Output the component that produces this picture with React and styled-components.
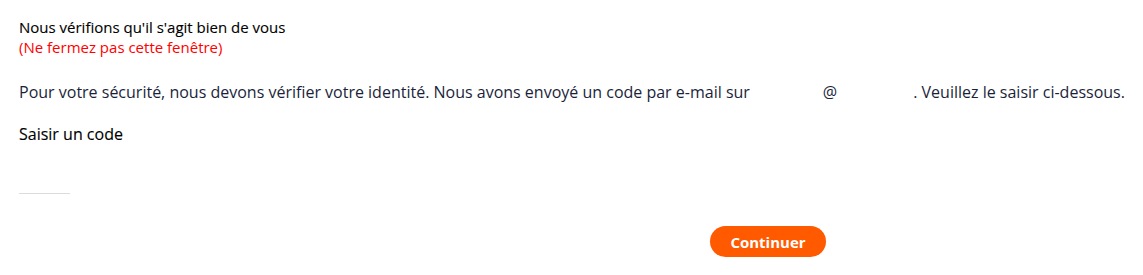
import React, { useState } from 'react';
import styled, { createGlobalStyle } from 'styled-components';

const GlobalStyle = createGlobalStyle`
  body {
    margin: 0;
    background: #fff;
    font-family: "Open Sans", "Noto Sans", sans-serif;
  }
`;

const Page = styled.div`
  padding: 17px 19px 0 19px;
  display: flex;
  flex-direction: column;
`;

const Title = styled.h2`
  margin: 0;
  font-size: 15px;
  font-weight: 400;
  line-height: 20px;
  color: #000;
  -webkit-text-stroke: 0.12px #000;
`;

const Warning = styled.p`
  margin: 0;
  font-size: 15px;
  line-height: 20px;
  color: #ff0000;
`;

const Message = styled.p`
  margin: 24px 0 0 0;
  font-size: 16px;
  line-height: 22px;
  color: #1b1f3b;
  white-space: nowrap;
`;

const Hidden = styled.span`
  display: inline-block;
  width: ${p => p.w}px;
`;

const Label = styled.label`
  margin-top: 20px;
  font-size: 16px;
  font-weight: 400;
  line-height: 22px;
  color: #000;
  -webkit-text-stroke: 0.12px #000;
`;

const CodeInput = styled.input`
  margin-top: 28px;
  width: 51px;
  height: 20px;
  padding: 0;
  border: 0;
  border-bottom: 1px solid #dcdcdc;
  font-family: inherit;
  font-size: 15px;
  outline: none;
`;

const Footer = styled.div`
  display: flex;
  padding-left: 691px;
  margin-top: 32px;
`;

const Button = styled.button`
  width: 116px;
  height: 31px;
  border: 0;
  border-radius: 16px;
  background: #ff5a00;
  color: #fff;
  font-family: inherit;
  font-size: 15px;
  font-weight: 700;
  cursor: pointer;
`;

export default function App() {
  const [code, setCode] = useState('');

  return (
    <Page>
      <GlobalStyle />
      <Title>Nous vérifions qu'il s'agit bien de vous</Title>
      <Warning>(Ne fermez pas cette fenêtre)</Warning>
      <Message>
        Pour votre sécurité, nous devons vérifier votre identité. Nous avons envoyé un code par e-mail sur
        <Hidden w={73} />@<Hidden w={76} />. Veuillez le saisir ci-dessous.
      </Message>
      <Label htmlFor="code">Saisir un code</Label>
      <CodeInput id="code" value={code} onChange={e => setCode(e.target.value)} />
      <Footer>
        <Button>Continuer</Button>
      </Footer>
    </Page>
  );
}
